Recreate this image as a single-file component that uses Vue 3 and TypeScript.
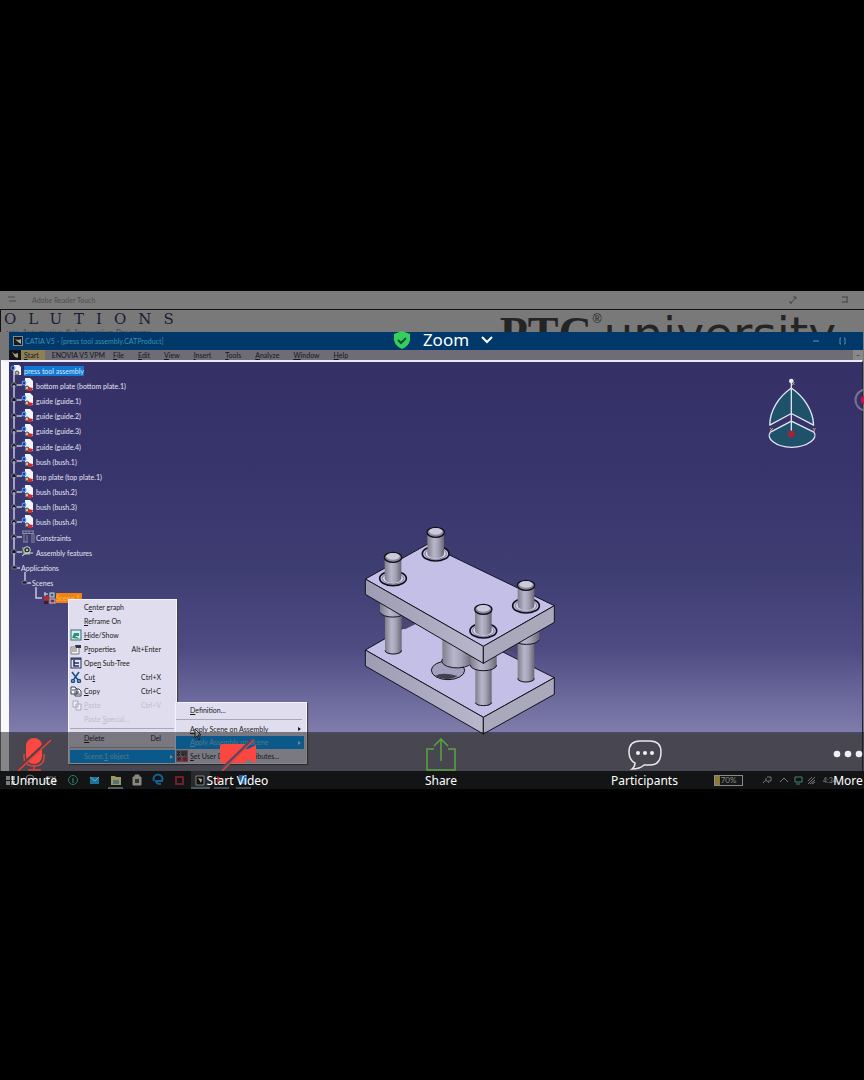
<script setup lang="ts">
interface MenuEntry {
  pre: string
  key: string
  post: string
  shortcut?: string
  icon?: string
  disabled?: boolean
  active?: boolean
  arrow?: boolean
  divider?: boolean
}

const menubar = [
  { pre: '', key: 'F', post: 'ile' },
  { pre: '', key: 'E', post: 'dit' },
  { pre: '', key: 'V', post: 'iew' },
  { pre: '', key: 'I', post: 'nsert' },
  { pre: '', key: 'T', post: 'ools' },
  { pre: '', key: 'A', post: 'nalyze' },
  { pre: '', key: 'W', post: 'indow' },
  { pre: '', key: 'H', post: 'elp' },
]

const parts: string[] = [
  'bottom plate (bottom plate.1)',
  'guide (guide.1)',
  'guide (guide.2)',
  'guide (guide.3)',
  'guide (guide.4)',
  'bush (bush.1)',
  'top plate (top plate.1)',
  'bush (bush.2)',
  'bush (bush.3)',
  'bush (bush.4)',
]

const contextMenu: MenuEntry[] = [
  { pre: 'C', key: 'e', post: 'nter graph' },
  { pre: '', key: 'R', post: 'eframe On' },
  { pre: '', key: 'H', post: 'ide/Show', icon: 'show' },
  { pre: 'P', key: 'r', post: 'operties', shortcut: 'Alt+Enter', icon: 'props' },
  { pre: 'Ope', key: 'n', post: ' Sub-Tree', icon: 'tree' },
  { pre: 'Cu', key: 't', post: '', shortcut: 'Ctrl+X', icon: 'cut' },
  { pre: '', key: 'C', post: 'opy', shortcut: 'Ctrl+C', icon: 'copy' },
  { pre: '', key: 'P', post: 'aste', shortcut: 'Ctrl+V', icon: 'paste', disabled: true },
  { pre: 'Paste ', key: 'S', post: 'pecial...', disabled: true },
  { pre: '', key: 'D', post: 'elete', shortcut: 'Del', divider: true },
  { pre: 'Scene.', key: '1', post: ' object', active: true, arrow: true, divider: true },
]

const sceneMenu: MenuEntry[] = [
  { pre: '', key: 'D', post: 'efinition...' },
  { pre: '', key: 'A', post: 'pply Scene on Assembly', arrow: true, divider: true },
  { pre: '', key: 'A', post: 'pply Assembly on Scene', arrow: true, active: true },
  { pre: '', key: 'S', post: 'et User Defined Attributes...', icon: 'attr' },
]

const pillars = [
  { x: 257, top: 52, base: 116 },
  { x: 129, top: 127, base: 190 },
  { x: 528, top: 211, base: 272 },
  { x: 400, top: 283, base: 347 },
]
</script>

<template>
  <main class="page">
    <section class="share">
      <header class="reader">
        <svg class="burger" viewBox="0 0 9 8"><path d="M0 1h7M1 5h7" /></svg>
        <span class="reader-name">Adobe Reader Touch</span>
        <svg class="reader-btns" viewBox="0 0 62 10">
          <path d="M3 8l5-6M5 2h3v2M2 6v2h2M54 2h6M54 7h6M59 2v5" />
        </svg>
      </header>
      <div class="banner">
        <div class="brand">
          <span class="brand-name">OLUTIONS</span>
          <span class="brand-sub">ugo Automotive &amp; Innovation Programs</span>
        </div>
        <div class="ptc">
          <span class="ptc-mark">PTC</span><sup>®</sup><span class="ptc-word">university</span>
        </div>
      </div>

      <div class="window">
        <div class="titlebar">
          <svg class="app-icon" viewBox="0 0 10 10"><rect width="10" height="10" fill="#14191c" /><rect x=".5" y=".5" width="9" height="9" fill="none" stroke="#7c8a92" /><path d="M2 3l3 1 3-1v5L5 6z" fill="#a9aa9e" /></svg>
          <span>CATIA V5 - [press tool assembly.CATProduct]</span>
          <svg class="win-btns" viewBox="0 0 36 8"><path d="M1 4h6M29 1h-1v6h1M32 1h1v6h-1" /></svg>
        </div>
        <nav class="menubar">
          <svg class="menu-icon" viewBox="0 0 12 10"><rect width="12" height="10" fill="#111216" /><path d="M3 2l3 2 3-1v5L6 7z" fill="#a29d83" /></svg>
          <button class="start"><u>S</u>tart</button>
          <button class="enovia">ENOVIA V5 VPM</button>
          <button v-for="m in menubar" :key="m.key">{{ m.pre }}<u>{{ m.key }}</u>{{ m.post }}</button>
          <span class="restore">–</span>
        </nav>

        <div class="canvas">
          <ul class="tree">
            <li class="root">
              <svg class="root-icon" viewBox="0 0 14 15">
                <path d="M5 2h5l2 2v8H5z" fill="#f4f6ff" />
                <circle cx="4" cy="5" r="2" fill="none" stroke="#4d92f0" /><circle cx="8" cy="10" r="2" fill="#b5b5a4" stroke="#555" />
              </svg>
              <span class="selected">press tool assembly</span>
            </li>
            <li v-for="p in parts" :key="p">
              <svg class="node" viewBox="0 0 26 15">
                <path d="M5-8V7M8 7h5" class="wire" /><circle cx="5" cy="7" r="2.4" class="knob" />
                <path d="M16 0h5l3 3v9h-8z" fill="#f2f3fc" />
                <circle cx="15" cy="5" r="1.8" fill="none" stroke="#4f97ff" stroke-width="1.2" />
                <circle cx="18" cy="10" r="2" fill="#c9bfa8" stroke="#4c4850" />
                <path d="M19 9l5 1-1 3h-4z" fill="#c4302d" />
              </svg>
              <span>{{ p }}</span>
            </li>
            <li>
              <svg class="node" viewBox="0 0 26 15">
                <path d="M5-8V7M8 7h5" class="wire" /><circle cx="5" cy="7" r="2.4" class="knob" />
                <path d="M13 1h12M13 3.500h12M14 1v3M17 1v3M20 1v3M24 1v3M15 4v8M18 5v7M23 4v9M25 4v9M14 12h5" stroke="#8b8b9c" fill="none" />
              </svg>
              <span>Constraints</span>
            </li>
            <li>
              <svg class="node" viewBox="0 0 26 15">
                <path d="M5-8V7M8 7h5" class="wire" /><circle cx="5" cy="7" r="2.4" class="knob" />
                <path d="M13 2h8v8h-7z" fill="#6f8076" /><circle cx="18" cy="5" r="3.300" fill="#2d3a36" stroke="#c9d5cf" /><circle cx="18" cy="5" r="1" fill="#dfe8d8" /><path d="M13 11l4-3h7" stroke="#ddd" fill="none" />
              </svg>
              <span>Assembly features</span>
            </li>
            <li>
              <svg class="node apps" viewBox="0 0 12 15"><path d="M5-8V6M3 7h8" class="wire" /><rect x="3" y="5" width="5" height="3" rx="1" class="knob" /></svg>
              <span>Applications</span>
            </li>
            <li>
              <svg class="node scenes" viewBox="0 0 23 15"><path d="M16-4V6M15 7h7" class="wire" /><rect x="13" y="5" width="5" height="3" rx="1" class="knob" /></svg>
              <span>Scenes</span>
            </li>
            <li>
              <svg class="node scene" viewBox="0 0 47 15">
                <path d="M27-4V7h6" class="wire" />
                <path d="M36 1v4M35 3h4" stroke="#ddd" /><rect x="35" y="5" width="5" height="4" fill="#b92b30" /><rect x="41" y="2" width="4" height="4" fill="#286f70" stroke="#d6d6dc" /><rect x="41" y="8" width="5" height="4" fill="#872832" stroke="#ccc" /><path d="M35 10h4v3h-4z" fill="#431b26" />
              </svg>
              <span class="orange">Scene.1</span>
            </li>
          </ul>

          <svg class="model" viewBox="0 0 660 675">
            <defs>
              <linearGradient id="rod"><stop offset="0" stop-color="#807e8b" /><stop offset=".4" stop-color="#b8b6cb" /><stop offset=".65" stop-color="#a4a2b5" /><stop offset="1" stop-color="#696775" /></linearGradient>
              <linearGradient id="side"><stop offset="0" stop-color="#9e9cb4" /><stop offset="1" stop-color="#b9b7cb" /></linearGradient>
            </defs>
            <g stroke="#14131f" stroke-width="3" stroke-linejoin="round">
              <path d="M46 405L232 298L613 488L400 607z" fill="#c3bfe6" />
              <path d="M46 405L400 607V657L46 453z" fill="url(#side)" />
              <path d="M400 607L613 488V538L400 657z" fill="#aaa8bb" />
              <ellipse cx="294" cy="466" rx="50" ry="28" fill="#a3a0bd" />
              <path d="M255 483q20-13 68 0q-28 19-68 0z" fill="#41404f" stroke="none" />
            </g>
            <path d="M154 302L208 322L165 343L154 338zM466 400L508 388V422z" fill="#4a4775" />
            <path d="M277 360h88v80a44 20 0 0 1-88-8z" fill="url(#rod)" />
            <path d="M277 432a44 20 0 0 0 88 12" class="edge" />
            <g class="post">
              <path d="M105 290h50v118a25 11 0 0 1-50 0z" /><path d="M503 370h50v122a25 11 0 0 1-50 0z" /><path d="M376 445h49v120a25 11 0 0 1-49 0z" />
              <path d="M90 260h77v32a39 17 0 0 1-77 0z" /><path d="M491 345h77v29a39 17 0 0 1-77 0z" /><path d="M361 415h79v35a39 17 0 0 1-79 0z" />
            </g>
            <path d="M105 406a25 11 0 0 0 50 0M503 490a25 11 0 0 0 50 0M376 563a25 11 0 0 0 49 0M90 292a39 17 0 0 0 77 0M491 374a39 17 0 0 0 77 0M361 450a39 17 0 0 0 79 0" class="edge" />
            <g stroke="#14131f" stroke-width="3" stroke-linejoin="round">
              <path d="M46 192L232 88L613 272L400 394z" fill="#c3bfe6" />
              <path d="M46 192L400 394V445L46 238z" fill="url(#side)" />
              <path d="M400 394L613 272V322L400 445z" fill="#aaa8bb" />
            </g>
            <g v-for="p in pillars" :key="p.x">
              <ellipse :cx="p.x" :cy="p.base" rx="40" ry="22" fill="#c3bfe6" stroke="#11101a" stroke-width="5" />
              <ellipse :cx="p.x" :cy="p.base" rx="32" ry="17" fill="#d9d7ee" stroke="#55526b" stroke-width="2" />
              <path :d="`M${p.x - 25} ${p.top}V${p.base}a25 14 0 0 0 50 0V${p.top}z`" fill="url(#rod)" />
              <ellipse :cx="p.x" :cy="p.top" rx="26" ry="15" fill="#898797" stroke="#11101a" stroke-width="4" />
              <ellipse :cx="p.x" :cy="p.top - 3" rx="20" ry="10" fill="#cbc9dc" />
            </g>
          </svg>

          <svg class="compass" viewBox="0 0 150 220">
            <g fill="#20516a" stroke="#e3e4f4" stroke-width="4" stroke-linejoin="round">
              <path d="M73 33C34 60 8 102 8 145L73 110L140 145C139 102 112 60 73 33z" />
              <path d="M73 133L10 166C-5 184 24 211 74 212C124 211 155 184 141 166z" />
            </g>
            <path d="M73 12V168" stroke="#dfe0f2" stroke-width="4" />
            <circle cx="73" cy="12" r="7" fill="#eceaf5" /><circle cx="73" cy="172" r="11" fill="#9c2635" />
            <path d="M76 16l6 7M82 16l-7 9M9 154l8 9M17 154l-8 9M138 154l4 5l4-5M142 159v5" stroke="#c7b46d" stroke-width="3" fill="none" />
          </svg>
          <svg class="record" viewBox="0 0 10 24"><circle cx="12" cy="12" r="10.500" fill="none" stroke="#77728f" stroke-width="2" /><circle cx="12" cy="12" r="5" fill="#d8124c" /></svg>
        </div>
      </div>

      <footer class="taskbar">
        <svg viewBox="0 0 260 18" class="apps-row">
          <path d="M6 5h4v4H6zM11 5h4v4h-4zM6 10h4v4H6zM11 10h4v4h-4z" fill="#7d7d7d" />
          <circle cx="30" cy="8" r="4" class="line" /><path d="M46 6h7v6h-7zM55 5v8" class="line" />
          <circle cx="73" cy="9" r="4.500" fill="none" stroke="#27805f" /><path d="M73 7v5" stroke="#468d73" />
          <path d="M90 6h9v7h-9z" fill="#19759c" /><path d="M90 6l5 4 4-4" stroke="#72a9bd" fill="none" />
          <path d="M111 5h4l1 1h5v8h-10z" fill="#9a9765" /><path d="M113 9h6v4h-6z" fill="#576f76" /><path d="M108 17h15" stroke="#8ca7b1" />
          <path d="M133 6h8v8h-8zM135 6V4h4v2" fill="#898879" stroke="#8a8a80" /><path d="M135 8h4v4h-4z" fill="#333" />
          <path d="M154 10a4.500 4.500 0 1 1 8 0h-6q0 3 5 3" fill="none" stroke="#145f91" stroke-width="2" />
          <path d="M176 6h7v7h-7z" fill="none" stroke="#71202a" stroke-width="2" />
          <path d="M191 0h19v18h-19z" fill="#282a2c" /><path d="M196 5h8v9h-8z" fill="#111" stroke="#828282" /><path d="M198 7l4 1-1 4z" fill="#aaa" />
          <path d="M217 5l5 3-5 5z" fill="#a9252c" /><path d="M239 4h8v9h-8z" fill="#1d5d9b" /><path d="M214 17h15M236 17h15M191 17h19" stroke="#698999" />
        </svg>
        <div class="tray">
          <span class="battery">70%</span>
          <svg class="tray-icons" viewBox="0 0 56 14">
            <path d="M2 10q3-5 6 0M4 6h2M6 4h4v4h-3" class="line" /><path d="M19 9l4-4 4 4" class="line" /><path d="M34 4h7v5h-7zM35 11h4" class="line teal" /><path d="M47 11l7-7M49 11l5-4M51 11l3-2M47 8l4-4" class="line" />
          </svg>
          <span class="clock">4:34</span>
        </div>
      </footer>

      <div class="menu context">
        <button v-for="m in contextMenu" :key="m.pre + m.key + m.post" :class="{ off: m.disabled, active: m.active, divider: m.divider }">
          <svg class="mi" viewBox="0 0 12 12">
            <g v-if="m.icon === 'show'"><rect x="1" y="1" width="10" height="10" fill="#dceee9" stroke="#286b80" /><path d="M2 9l2-5h5v3H5l5 3z" fill="#2e9276" /></g>
            <g v-else-if="m.icon === 'props'"><path d="M1 4h8v7H1z" fill="#f4f4f6" stroke="#777889" /><path d="M5 2h6v3H6z" fill="#2a384d" /><path d="M2 6h5M2 8h5" stroke="#83705e" /></g>
            <g v-else-if="m.icon === 'tree'"><rect x="1" y="1" width="10" height="10" fill="#e2e3f3" stroke="#25315f" /><path d="M1 2h10M4 3v6h5M4 6h5" stroke="#25315f" stroke-width="1.500" fill="none" /></g>
            <g v-else-if="m.icon === 'cut'" fill="none" stroke="#194c87" stroke-width="1.500"><path d="M2 1l6 8M9 1L4 8" /><circle cx="3" cy="10" r="1.500" /><circle cx="9" cy="10" r="1.500" /></g>
            <g v-else-if="m.icon === 'copy'" fill="#fff" stroke="#3b425c"><path d="M1 2h4l2 2v5H1zM5 4h4l2 2v5H5z" /><path d="M6 7h3M6 9h4M2 5h2" /></g>
            <g v-else-if="m.icon === 'paste'" fill="#eeeef5" stroke="#a8a8b5"><path d="M3 2h5v6H3zM6 5h5v6H6z" /></g>
          </svg>
          <span>{{ m.pre }}<u>{{ m.key }}</u>{{ m.post }}</span>
          <span v-if="m.shortcut" class="short">{{ m.shortcut }}</span>
          <span v-if="m.arrow" class="arrow"></span>
        </button>
      </div>

      <div class="menu sub">
        <button v-for="m in sceneMenu" :key="m.post" :class="{ active: m.active, divider: m.divider }">
          <svg class="mi" viewBox="0 0 12 12">
            <g v-if="m.icon === 'attr'"><path d="M0 0h12v12H0z" fill="#8d8a94" /><path d="M1 2h3L1 5h3M6 1v4h2V1M10 1v5" stroke="#111" fill="none" /><circle cx="3" cy="9" r="2" fill="#b01c30" /><circle cx="9" cy="9" r="2.500" fill="#d02438" /></g>
          </svg>
          <span>{{ m.pre }}<u>{{ m.key }}</u>{{ m.post }}</span>
          <span v-if="m.arrow" class="arrow"></span>
        </button>
      </div>
      <svg class="cursor" viewBox="0 0 8 12"><path d="M1 0v9l2-2 2 4 1-1-2-4h3z" fill="#f4f4fa" stroke="#222" /></svg>

      <div class="meeting">
        <svg class="shield" viewBox="0 0 18 18"><path d="M9 0L17 3V9Q16 15 9 18Q2 15 1 9V3z" fill="#33d15c" /><path d="M5 9l3 3 5-5" fill="none" stroke="#0b4d3c" stroke-width="2" /></svg>
        <button>Zoom <svg class="chev" viewBox="0 0 12 8"><path d="M1 1l5 5 5-5" fill="none" stroke="#fff" stroke-width="2" /></svg></button>
      </div>

      <nav class="controls">
        <button>
          <svg viewBox="0 0 36 34"><rect x="10" y="1" width="16" height="26" rx="8" fill="#fb4840" /><path d="M8 17v3q0 9 10 9T28 20v-3M18 28v5M12 33h13" fill="none" stroke="#d9443f" stroke-width="1.500" /><path d="M1 33L34 2" stroke="#5b3d46" stroke-width="3" /><path d="M2 34L35 3" stroke="#df423f" stroke-width="1.500" /></svg>
          <span>Unmute</span>
        </button>
        <button>
          <svg viewBox="0 0 46 34"><path d="M5 9q0-2 2-2h22q2 0 2 2v4l10-5v18l-10-4v4H7q-2 0-2-2z" fill="#fc4740" /><path d="M8 31L38 2" stroke="#574763" stroke-width="3" /><path d="M7 34L39 3" stroke="#db4443" stroke-width="1.500" /></svg>
          <span>Start Video</span>
        </button>
        <button>
          <svg viewBox="0 0 30 34"><path d="M8 12H1v21h28V12h-7M15 24V2M8 9l7-7 7 7" fill="none" stroke="#58a63b" stroke-width="1.500" /></svg>
          <span>Share</span>
        </button>
        <button>
          <svg viewBox="0 0 34 34"><path d="M12 4h10Q33 4 33 15Q33 28 22 28H16Q12 32 4 32Q7 30 7 26Q1 23 1 15Q1 4 12 4z" fill="none" stroke="#e6e6ee" stroke-width="1.500" /><g fill="#f0f0f6"><circle cx="10" cy="16" r="2" /><circle cx="17" cy="16" r="2" /><circle cx="24" cy="16" r="2" /></g></svg>
          <span>Participants</span>
        </button>
        <button>
          <svg viewBox="0 0 30 34"><g fill="#eeeef4"><circle cx="4" cy="17" r="3.300" /><circle cx="15" cy="17" r="3.300" /><circle cx="26" cy="17" r="3.300" /></g></svg>
          <span>More</span>
        </button>
      </nav>
    </section>
  </main>
</template>

<style>
body { margin: 0; background: #000; }
</style>

<style scoped>
* { box-sizing: border-box; }
.page { min-height: 100vh; padding-top: 291px; background: #000; font-family: Lato, "Noto Sans", sans-serif; font-size: 7px; }
button { font: inherit; color: inherit; background: none; border: 0; padding: 0; margin: 0; white-space: nowrap; cursor: pointer; }
svg { display: block; flex: none; }
.share { position: relative; overflow: hidden; background: #777; }
.reader { height: 19px; background: #7b7b7b; border-bottom: 1px solid #111; display: flex; align-items: center; padding: 0 14px 0 8px; color: #4f4f4f; }
.burger { width: 9px; height: 8px; stroke: #4c4c4c; fill: none; }
.reader-name { margin-left: 15px; }
.reader-btns { width: 62px; height: 10px; margin-left: auto; fill: none; stroke: #454545; }
.banner { height: 22px; overflow: hidden; background: #797979; border-left: 1px solid #111; display: flex; justify-content: space-between; color: #242424; }
.brand { display: flex; flex-direction: column; padding-left: 3px; white-space: nowrap; }
.brand-name { font: 15px/18px "DejaVu Serif", serif; letter-spacing: 12px; color: #1b1b37; }
.brand-sub { font: italic 9px/9px "Liberation Serif", serif; color: #42424e; padding-left: 2px; }
.ptc { display: flex; align-items: flex-start; padding-right: 28px; white-space: nowrap; }
.ptc-mark { font: bold 46px/48px "Liberation Serif", serif; }
.ptc sup { font: 12px/18px "Liberation Sans", sans-serif; margin: 0 2px 0 1px; }
.ptc-word { font: 47px/47px "DejaVu Sans", sans-serif; }
.window { margin-right: 1px; border-left: 1px solid #777; }
.titlebar { margin-left: 8px; height: 18px; background: #00386a; display: flex; align-items: center; gap: 2px; padding: 0 15px 0 4px; color: #3f8fae; }
.app-icon { width: 10px; height: 10px; }
.win-btns { width: 36px; height: 8px; margin-left: auto; stroke: #5f8fae; fill: none; }
.menubar { margin-left: 8px; height: 10px; background: #6d6c77; display: flex; align-items: center; gap: 14px; color: #16161c; line-height: 10px; }
.menu-icon { width: 12px; height: 10px; margin-right: -14px; }
.start { background: #8d8052; padding: 0 6px 0 3px; }
.enovia { margin: 0 -6px 0 -7px; }
.restore { margin-left: auto; width: 10px; background: #888; text-align: center; }
.canvas { position: relative; height: 411px; border-left: 8px solid #f7f7fc; border-top: 2px solid #e8e9f8; border-right: 1px solid #25233c; background: linear-gradient(#353167 0%, #37346c 25%, #3e3d72 50%, #4d4b82 70%, #6e6b9e 83%, #817eac 91%, #7c7a8c 91%, #7c7a8c 100%); }
.tree { list-style: none; margin: 0; padding: 0; position: absolute; top: 1px; left: 0; height: 243px; display: grid; grid-auto-rows: 1fr; color: #e3e3f2; line-height: 10px; }
.tree li { display: flex; align-items: center; gap: 1px; white-space: nowrap; }
.root-icon { width: 14px; height: 15px; }
.node { width: 26px; height: 15px; overflow: visible; }
.node.apps { width: 12px; }
.node.scenes { width: 23px; }
.node.scene { width: 47px; }
.tree li:has(.apps), .tree li:has(.scenes), .tree li:has(.scene) { gap: 0; }
.wire { fill: none; stroke: #c5c5d8; stroke-width: 1.5; }
.knob { fill: #16151f; stroke: #77778c; stroke-width: 1; }
.selected { background: #1177d2; color: #d7ebff; }
.orange { background: #f08315; color: #ffb34b; padding-right: 2px; }
.model { position: absolute; left: 40%; top: 153px; width: 220px; height: 225px; }
.edge { fill: none; stroke: #14131f; stroke-width: 3; }
.post { fill: url(#rod); }
.compass { position: absolute; right: 45px; top: 15px; width: 50px; height: 73px; }
.record { position: absolute; right: -2px; top: 26px; width: 10px; height: 24px; }
.taskbar { height: 18px; background: #131415; display: flex; align-items: center; justify-content: space-between; color: #8c8c88; }
.apps-row { width: 260px; height: 18px; }
.line { fill: none; stroke: #777; }
.teal { stroke: #3e8678; }
.tray { display: flex; align-items: center; padding-right: 27px; }
.battery { width: 29px; height: 11px; border: 1px solid #8b8b85; background: linear-gradient(90deg, #8d7a37 5px, #17181a 5px); text-align: center; font-size: 8px; line-height: 9px; margin-right: 18px; }
.tray-icons { width: 56px; height: 14px; margin-right: 6px; }
.menu { position: absolute; display: flex; flex-direction: column; background: #e0deee; border: 1px solid #f4f3fc; color: #191923; box-shadow: 1px 1px 1px #444; }
.menu button { display: flex; align-items: center; height: 14px; line-height: 13px; text-align: left; }
.menu u { text-underline-offset: 1px; }
.mi { width: 12px; height: 12px; margin-right: 2px; }
.context { left: 68px; top: 308px; width: 109px; padding-left: 1px; }
.context .short { margin-left: auto; padding-right: 15px; }
.context .off { color: #bebccb; }
.context .divider { position: relative; margin-top: 5px; }
.menu .divider::before { content: ""; position: absolute; left: 0; right: 2px; top: -3px; height: 1px; background: #aaa8b8; }
.menu .active { background: #009fff; color: #8fdcff; height: 13px; }
.arrow { margin-left: auto; margin-right: 3px; border-left: 3px solid currentColor; border-top: 2px solid transparent; border-bottom: 2px solid transparent; }
.menu .active .arrow { border-left-color: #e7f4ff; }
.sub { left: 175px; top: 411px; width: 132px; padding-right: 2px; }
.sub .divider { position: relative; margin-top: 5px; }
.cursor { position: absolute; left: 194px; top: 438px; width: 8px; height: 12px; }
.meeting { position: absolute; top: 38px; left: 0; right: 0; height: 22px; display: flex; align-items: center; justify-content: center; gap: 12px; padding-left: 22px; color: #fff; }
.meeting button { display: flex; align-items: center; gap: 12px; font: 17px/22px "Noto Sans", sans-serif; }
.shield { width: 18px; height: 18px; }
.chev { width: 12px; height: 8px; }
.controls { position: absolute; left: 0; right: -18px; bottom: 0; height: 57px; display: flex; justify-content: space-between; background: linear-gradient(rgba(20, 20, 22, .5) 39px, transparent 39px); color: #fff; }
.controls button { width: 68px; display: flex; flex-direction: column; align-items: center; padding-top: 5px; font: 12px/20px "Noto Sans", sans-serif; }
.controls svg { height: 34px; }
</style>
